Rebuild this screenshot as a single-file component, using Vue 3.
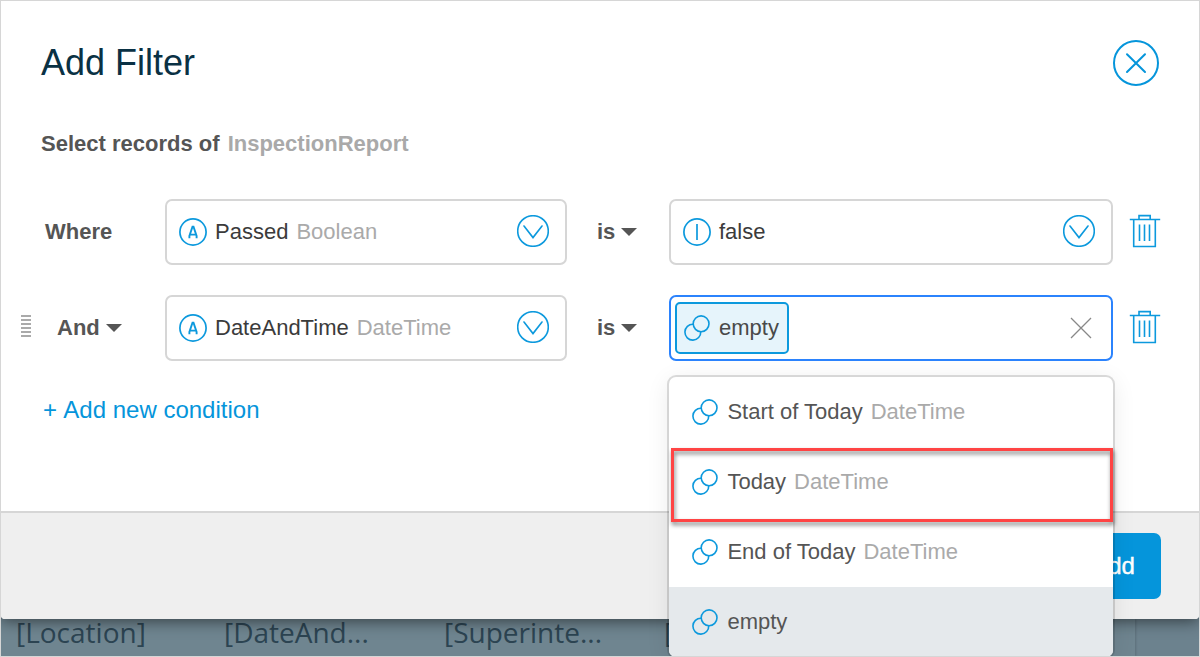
<script setup>
const columns = ['[Location]', '[DateAnd...', '[Superinte...', '[']
const rows = [
  { join: 'Where', field: 'Passed', type: 'Boolean', value: 'false', editing: false },
  { join: 'And', field: 'DateAndTime', type: 'DateTime', value: 'empty', editing: true },
]
const options = [
  { label: 'Start of Today', type: 'DateTime' },
  { label: 'Today', type: 'DateTime', marked: true },
  { label: 'End of Today', type: 'DateTime' },
  { label: 'empty', type: '', selected: true },
]
</script>

<template>
  <div class="frame">
    <div class="dialog">
      <header class="head">
        <h1>Add Filter</h1>
        <svg class="close" viewBox="0 0 46 46" width="46" height="46">
          <circle cx="23" cy="23" r="22" />
          <path d="M14 14.2 32 32M32 14.2 14 32" stroke-linecap="round" />
        </svg>
      </header>
      <p class="sub">Select records of <span>InspectionReport</span></p>

      <div class="rows">
        <div v-for="r in rows" :key="r.field" class="row">
          <div class="join" :class="{ second: r.editing }">
            <span v-if="r.editing" class="grip"></span>
            <b>{{ r.join }}</b>
            <i v-if="r.editing" class="caret"></i>
          </div>
          <div class="box field">
            <svg class="ic attr" viewBox="0 0 28 28" width="28" height="28">
              <circle cx="14" cy="14" r="13.1" stroke-width="1.7" />
              <path d="M10.4 20.2V18L13.5 8.6H14.5L17.6 18V20.2M10.9 16.6H17.1" stroke-width="1.9" />
            </svg>
            <span class="name">{{ r.field }}</span>
            <span class="type">{{ r.type }}</span>
            <svg class="ic down" viewBox="0 0 32 32" width="32" height="32">
              <circle cx="16" cy="16" r="15.3" />
              <path d="M7 11 16 22.6 25 11" stroke-linecap="round" />
            </svg>
          </div>
          <div class="op"><b>is</b><i class="caret"></i></div>
          <div class="box value" :class="{ active: r.editing }">
            <template v-if="!r.editing">
              <svg class="ic attr" viewBox="0 0 28 28" width="28" height="28">
                <circle cx="14" cy="14" r="13.1" stroke-width="1.7" />
                <path d="M14 6V22" stroke-width="1.7" />
              </svg>
              <span class="name lit">{{ r.value }}</span>
              <svg class="ic down" viewBox="0 0 32 32" width="32" height="32">
                <circle cx="16" cy="16" r="15.3" />
                <path d="M7 11 16 22.6 25 11" stroke-linecap="round" />
              </svg>
            </template>
            <template v-else>
              <span class="chip">
                <svg class="ic" viewBox="0 0 26 26" width="26" height="26">
                  <circle cx="17.1" cy="8.8" r="7.9" />
                  <path d="M9.2 9.3A7.9 7.9 0 1 0 16.7 16.7" />
                </svg>
                {{ r.value }}
              </span>
              <svg class="clear" viewBox="0 0 22 22" width="22" height="22">
                <path d="M1 1 21 21M21 1 1 21" />
              </svg>
            </template>
          </div>
          <svg class="ic trash" viewBox="0 0 32 34" width="32" height="34">
            <path d="M.8 5.5H31.2M10 5.5V1.6H21.2V5.5M4.7 5.5V32.5H26.3V5.5M10.5 10.5V27M15.5 10.5V27M20.5 10.5V27" />
          </svg>
        </div>
      </div>
      <div class="add"><span>+</span> Add new condition</div>
      <footer class="foot"><button>Add</button></footer>
    </div>

    <div class="backdrop">
      <span v-for="c in columns" :key="c">{{ c }}</span>
    </div>

    <div class="menu">
      <div v-for="o in options" :key="o.label" class="opt" :class="{ sel: o.selected }">
        <svg class="ic" viewBox="0 0 26 26" width="26" height="26">
          <circle cx="17.1" cy="8.8" r="7.9" />
          <path d="M9.2 9.3A7.9 7.9 0 1 0 16.7 16.7" />
        </svg>
        <span>{{ o.label }}</span>
        <span class="type">{{ o.type }}</span>
        <div v-if="o.marked" class="mark"></div>
      </div>
    </div>
    <div class="edge"></div>
  </div>
</template>

<style>
body { margin: 0; overflow: hidden; }
</style>

<style scoped>
* { box-sizing: border-box; }
.frame {
  position: relative; width: 1200px; height: 657px; padding: 1px; overflow: hidden;
  background: #6c828e; font: 22px/26px "Liberation Sans", Arial, sans-serif; color: #555;
}
.edge { position: absolute; inset: 0; border: 1px solid #d6d6d6; z-index: 5; }
.dialog {
  position: relative; z-index: 1; height: 618px; background: #fff; border-radius: 0 0 4px 4px;
  box-shadow: 0 2px 16px rgba(0, 0, 0, .55); display: flex; flex-direction: column;
}
.head { display: flex; justify-content: space-between; padding: 39px 40px 0; height: 85px; }
h1 { margin: 0; font-size: 36px; line-height: 46px; font-weight: 400; color: #0a3144; }
.close { fill: none; stroke: #0595db; stroke-width: 2; }
.sub { margin: 45px 0 0 40px; font-weight: 700; line-height: 26px; }
.sub span { color: #a9a9a9; margin-left: 2px; }
.rows { margin-top: 42px; display: flex; flex-direction: column; gap: 30px; }
.row { display: flex; height: 66px; align-items: center; }
.join { width: 164px; padding-left: 44px; display: flex; align-items: center; height: 26px; }
.join.second { padding-left: 20px; }
.grip {
  width: 10px; height: 22px; margin: 0 26px 4px 0;
  background: repeating-linear-gradient(#aaa 0 2px, #fff 2px 4px);
}
.caret { border: 8px solid transparent; border-top-color: #555; border-bottom: 0; margin: 0 0 0 6px; }
.box { display: flex; align-items: center; height: 66px; border: 2px solid #d6d6d6; border-radius: 7px; padding-left: 12px; }
.field { width: 402px; }
.value { width: 444px; }
.active { border-color: #2b83fd; padding-left: 4px; }
.ic { fill: none; stroke: #0c99dd; stroke-width: 1.6; flex: none; display: block; }
.attr { margin: 0 8px 0 0; }
.name { color: #3b3b3b; }
.type { color: #aaa; margin-left: 8px; }
.down { margin: 0 16px 2px auto; }
.op { display: flex; align-items: center; width: 102px; padding-left: 30px; }
.chip {
  display: flex; align-items: center; width: 114px; height: 52px; background: #e6f4fb;
  border: 2px solid #0c99dd; border-radius: 5px; padding-left: 7px; color: #494949;
}
.chip .ic { margin-right: 9px; }
.clear { margin: 0 19px 0 auto; fill: none; stroke: #888; stroke-width: 1.3; }
.trash { margin: 0 0 2px 16px; }
.add { margin: 35px 0 0 42px; font-size: 24px; line-height: 28px; color: #0595db; }
.add span { margin-right: 1px; }
.foot {
  margin-top: auto; height: 108px; border-top: 2px solid #d6d6d6; background: #efefef;
  border-radius: 0 0 4px 4px; display: flex; justify-content: flex-end; padding: 20px 38px 0 0;
}
button {
  height: 66px; width: 96px; border: 0; border-radius: 7px; background: #0595db; color: #fff;
  font: 24px "Liberation Sans", Arial, sans-serif; padding: 0 0 0 1px; -webkit-text-stroke: .4px #fff;
}
.backdrop {
  height: 37px; display: grid; grid-template-columns: 208px 220px 220px 1fr; width: 1134px; padding-left: 15px;
  font: 28px/26px "Open Sans", sans-serif; color: #2c4452; background: #6f8590; box-shadow: 1px 0 2px rgba(0, 0, 0, .15);
}
.menu {
  position: absolute; z-index: 3; left: 669px; top: 377px; width: 444px; height: 280px; background: #fff;
  border-radius: 7px; box-shadow: 0 0 0 2px rgba(0, 0, 0, .13), 0 4px 24px rgba(0, 0, 0, .09);
}
.opt { position: relative; height: 70px; display: flex; align-items: center; padding-left: 23px; }
.opt .ic { margin-right: 9.4px; }
.sel { background: #e5e9ec; border-radius: 0 0 7px 7px; }
.mark {
  position: absolute; left: 2px; top: 1px; width: 442px; height: 74px; z-index: 1;
  border: 3px solid #ff4444; filter: drop-shadow(1px 3px 2px rgba(0, 0, 0, .5));
}
</style>
